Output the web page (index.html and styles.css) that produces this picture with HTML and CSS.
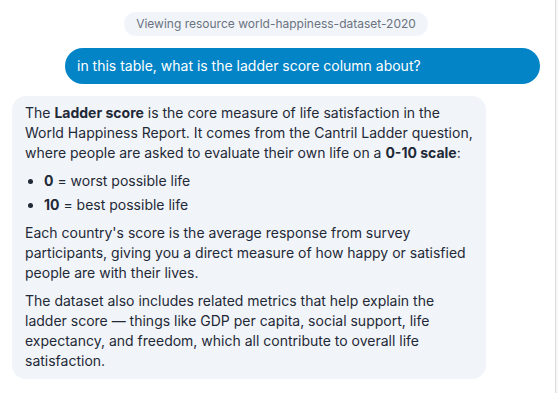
FILE: index.html
```html
<!DOCTYPE html>
<html>
<head>
<meta charset="utf-8">
<link rel="stylesheet" href="styles.css">
</head>
<body>
<div class="page">
  <main class="chat">
    <div class="badge-row"><span class="badge">Viewing resource world-happiness-dataset-2020</span></div>
    <div class="user-row"><div class="user-msg">in this table, what is the ladder score column about?</div></div>
    <div class="assistant-msg">
      <p>The <strong>Ladder score</strong> is the core measure of life satisfaction in the World Happiness Report. It comes from the Cantril Ladder question, where people are asked to evaluate their own life on a <strong>0-10 scale</strong>:</p>
      <ul>
        <li><strong>0</strong> = worst possible life</li>
        <li><strong>10</strong> = best possible life</li>
      </ul>
      <p>Each country's score is the average response from survey participants, giving you a direct measure of how happy or satisfied people are with their lives.</p>
      <p>The dataset also includes related metrics that help explain the ladder score — things like GDP per capita, social support, life expectancy, and freedom, which all contribute to overall life satisfaction.</p>
    </div>
  </main>
  <div class="rail"></div>
</div>
</body>
</html>
```
FILE: styles.css
```css
html, body {
  margin: 0;
  padding: 0;
  background: #ffffff;
}
body {
  font-family: Inter, "Noto Sans", sans-serif;
  color: #1f2937;
  width: 558px;
  height: 406px;
  overflow: hidden;
}
.page {
  display: flex;
  height: 406px;
}
.chat {
  width: 555px;
  box-sizing: border-box;
  padding: 12px 15px 0 12px;
  display: flex;
  flex-direction: column;
  gap: 12px;
}
.rail {
  width: 2px;
  height: 393px;
  border-left: 1px solid #dcdcdc;
  background: #f7f7f7;
}
.badge-row {
  display: flex;
  justify-content: center;
}
.badge {
  background: #f1f5f9;
  color: #6b7280;
  font-size: 12px;
  line-height: 16px;
  padding: 4px 12px;
  border-radius: 999px;
}
.user-row {
  display: flex;
  justify-content: flex-end;
}
.user-msg {
  background: #0284c7;
  color: #ffffff;
  font-size: 14px;
  line-height: 20px;
  padding: 8px 12px;
  border-radius: 18px;
  width: 451px;
}
.assistant-msg {
  width: 474px;
  box-sizing: border-box;
  background: #f1f5f9;
  border-radius: 14px;
  padding: 7px 13px 8px 13px;
  font-size: 14px;
  line-height: 20px;
  color: #1f2937;
}
.assistant-msg p {
  margin: 0 0 8px 0;
}
.assistant-msg p:last-child {
  margin-bottom: 0;
}
.assistant-msg strong {
  font-weight: 700;
}
.assistant-msg ul {
  margin: 0 0 8px 0;
  padding-left: 19px;
}
.assistant-msg li {
  margin-bottom: 4px;
}
```
